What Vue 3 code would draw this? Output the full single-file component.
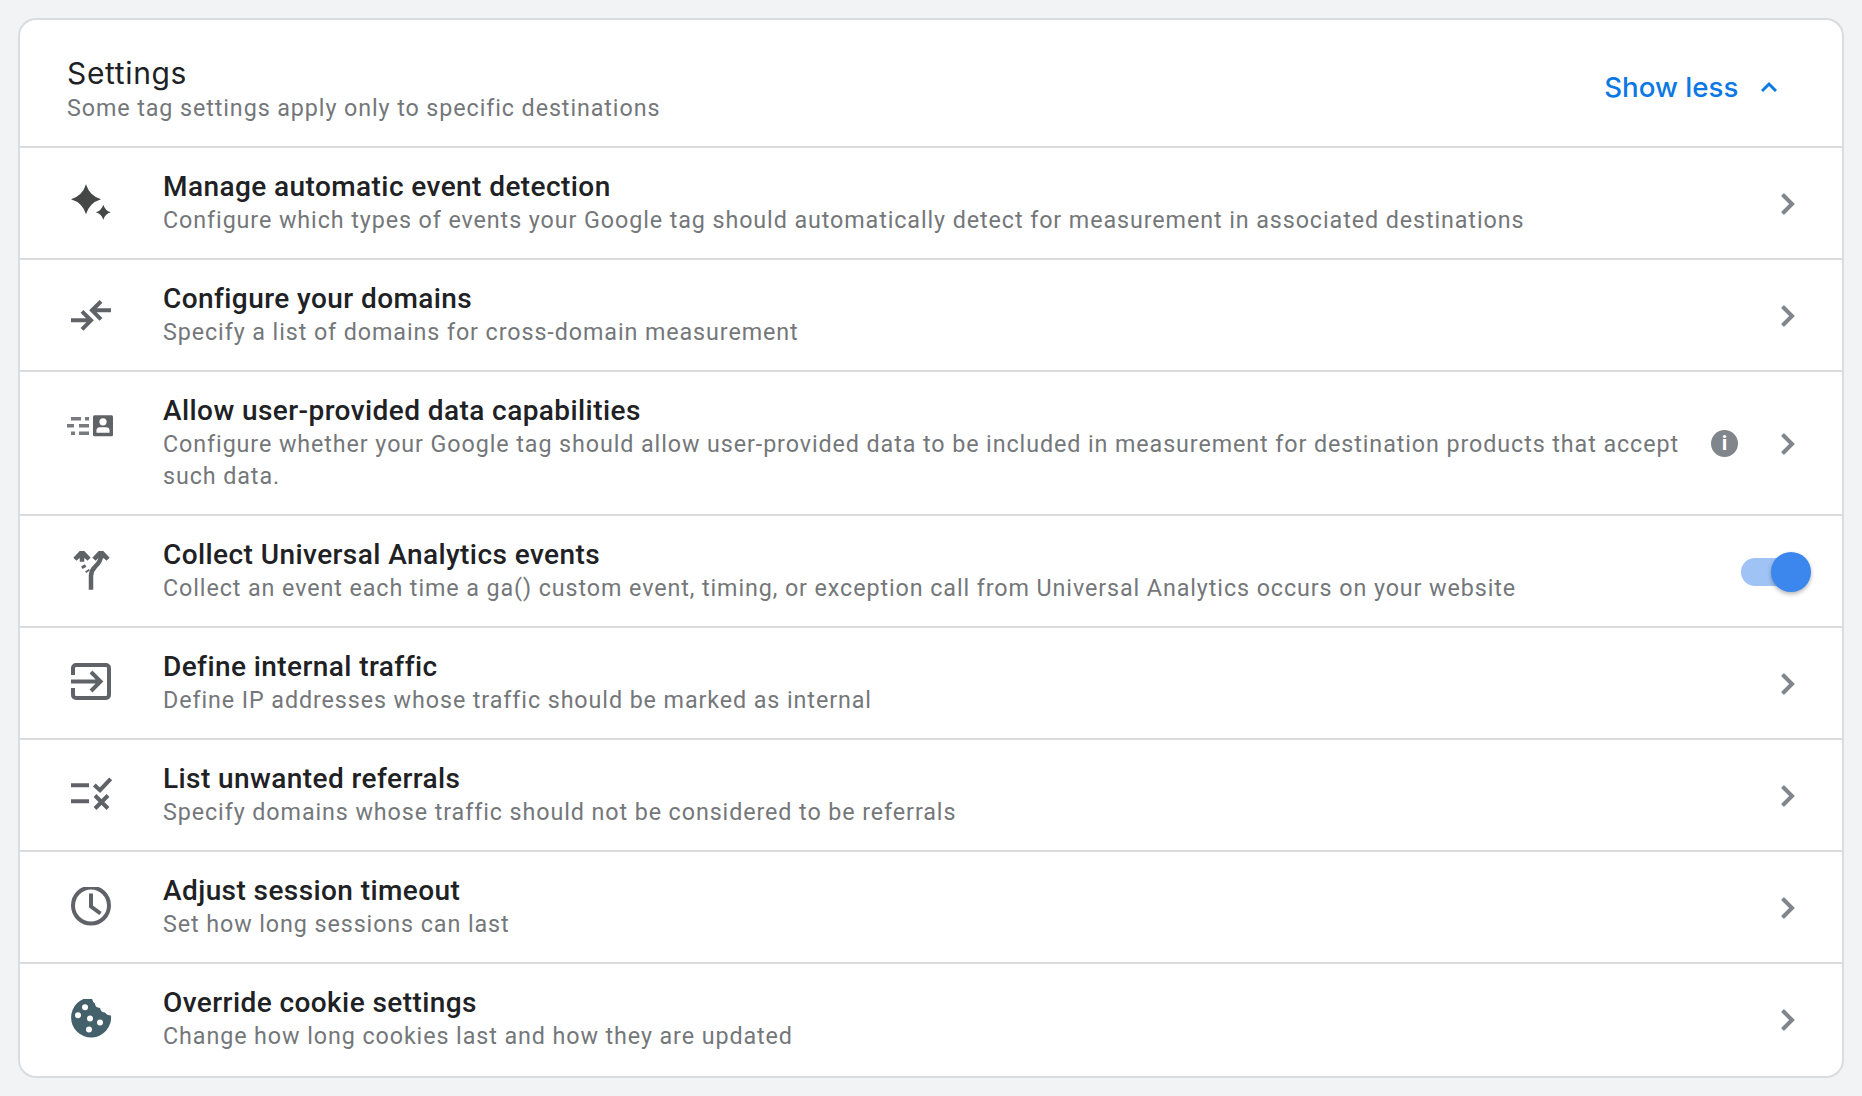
<script setup>
const rows = [
  { icon: 'spark', top: 183.7, title: 'Manage automatic event detection', sub: 'Configure which types of events your Google tag should automatically detect for measurement in associated destinations', ctrl: 'chevron' },
  { icon: 'arrows', top: 295.7, title: 'Configure your domains', sub: 'Specify a list of domains for cross-domain measurement', ctrl: 'chevron' },
  { icon: 'data', top: 407.7, title: 'Allow user-provided data capabilities', sub: 'Configure whether your Google tag should allow user-provided data to be included in measurement for destination products that accept such data.', ctrl: 'chevron', info: true },
  { icon: 'fork', top: 551.2, title: 'Collect Universal Analytics events', sub: 'Collect an event each time a ga() custom event, timing, or exception call from Universal Analytics occurs on your website', ctrl: 'toggle' },
  { icon: 'exit', top: 663, title: 'Define internal traffic', sub: 'Define IP addresses whose traffic should be marked as internal', ctrl: 'chevron' },
  { icon: 'list', top: 775.5, title: 'List unwanted referrals', sub: 'Specify domains whose traffic should not be considered to be referrals', ctrl: 'chevron' },
  { icon: 'clock', top: 887.5, title: 'Adjust session timeout', sub: 'Set how long sessions can last', ctrl: 'chevron' },
  { icon: 'cookie', top: 999.5, title: 'Override cookie settings', sub: 'Change how long cookies last and how they are updated', ctrl: 'chevron' },
]
</script>

<template>
  <main class="page">
    <section class="card">
      <header class="head">
        <div class="head-text">
          <h1 class="h-title">Settings</h1>
          <p class="h-sub">Some tag settings apply only to specific destinations</p>
        </div>
        <button class="more" type="button">
          <span>Show less</span>
          <svg width="16" height="12" viewBox="0 0 16 12" fill="none" stroke="#0b78e3" stroke-width="3"><path d="M1 10l7-7 7 7" /></svg>
        </button>
      </header>

      <div v-for="r in rows" :key="r.title" class="row" :class="r.icon">
        <svg class="ico" width="48" height="40" :viewBox="`67 ${r.top} 48 40`" fill="none" stroke="#5f6368" stroke-width="4">
          <g v-if="r.icon === 'spark'" fill="#444746" stroke="none">
            <path d="M86 184Q89.500 195.500 101 199Q89.500 202.500 86 214Q82.500 202.500 71 199Q82.500 195.500 86 184Z" />
            <path d="M103.300 204.500Q105 210.300 110.800 212Q105 213.700 103.300 219.500Q101.600 213.700 95.800 212Q101.600 210.300 103.300 204.500Z" />
          </g>
          <g v-else-if="r.icon === 'arrows'">
            <path d="M71 320H91M82 311l9 9-9 9" />
            <path d="M111 310H92M101 301l-9 9 9 9" />
          </g>
          <g v-else-if="r.icon === 'data'">
            <path stroke-width="3.600" opacity=".85" d="M71 418.500h10M85 418.500h4M67 425.500h7M79 425.500h10M71 433h4M79 433h10" />
            <rect x="93" y="415" width="20" height="21" rx="1.500" fill="#5f6368" stroke="none" />
            <circle cx="103" cy="421.500" r="3.600" fill="#fff" stroke="none" />
            <path d="M96.500 432.500V430Q96.500 427 100 427H106Q109.500 427 109.500 430V432.500Z" fill="#fff" stroke="none" />
          </g>
          <g v-else-if="r.icon === 'fork'" stroke-width="4.500">
            <path d="M91 590V576Q91 571 95 567Q101 562 101 555" />
            <path d="M82 562V555M83 565.500l1.500 2.500M87 570.500l1 1.500" />
            <path d="M94 559.500l7-7.500 7 7.500M75 559.500l7-7.500 7 7.500" />
            <path d="M101 553l-4 5h8ZM82 553l-4 5h8Z" fill="#5f6368" stroke-width="1" />
          </g>
          <g v-else-if="r.icon === 'exit'">
            <path d="M73 675V668a3 3 0 0 1 3-3H106a3 3 0 0 1 3 3V695a3 3 0 0 1-3 3H76a3 3 0 0 1-3-3V688" />
            <path d="M71 681.500H100M91 672l9.500 9.500-9.500 9.500" />
          </g>
          <g v-else-if="r.icon === 'list'">
            <path d="M71 785.700H89M71 801.700H89M94.300 785.500L100 790.700 110.700 779.300M95 796L108 809M108 796L95 809" />
          </g>
          <g v-else-if="r.icon === 'clock'">
            <circle cx="91" cy="906" r="18" />
            <path d="M91 894V907L100.500 914" />
          </g>
          <g v-else-if="r.icon === 'cookie'" stroke="none">
            <path fill="#44606b" d="M92 998A20 20 0 1 0 111 1016Q107 1016 105 1013Q101 1013 100 1008.500Q95 1008 95 1004Q92 1002 92 998Z" />
            <g fill="#fff">
              <circle cx="85" cy="1007.700" r="3" />
              <circle cx="78" cy="1015.700" r="3" />
              <circle cx="90" cy="1019" r="3" />
              <circle cx="100" cy="1023" r="3" />
              <circle cx="89" cy="1030" r="3" />
            </g>
          </g>
        </svg>

        <div class="text">
          <h2 class="title">{{ r.title }}</h2>
          <p class="sub">{{ r.sub }}</p>
        </div>

        <span v-if="r.info" class="info">i</span>

        <span v-if="r.ctrl === 'toggle'" class="toggle"><span class="knob"></span></span>
        <svg v-else class="chev" width="24" height="32" viewBox="0 0 24 32" fill="none" stroke="#80868b" stroke-width="4">
          <path d="M7.500 6.500L17 16l-9.500 9.500" />
        </svg>
      </div>
    </section>
  </main>
</template>

<style>
html, body { margin: 0; background: #f1f3f4; }
</style>

<style scoped>
.page { padding: 18px; height: 1060px; background: #f1f3f4; }
.card { box-sizing: border-box; background: #fff; border: 2px solid #dadce0; border-radius: 18px; font-family: Roboto, sans-serif; }
.head { box-sizing: border-box; height: 126.200px; padding: 36px 65px 0 47px; display: flex; justify-content: space-between; }
.h-title { margin: 0; font: 400 30px/34px Inter, sans-serif; letter-spacing: .65px; color: #202124; }
.h-sub { margin: 2.500px 0 0; font-size: 23.300px; line-height: 31.500px; letter-spacing: .91px; color: #74777a; }
.more { display: flex; align-items: center; gap: 22.600px; height: 34px; margin-top: 14px; padding: 0; border: 0; background: none; font: 500 27.700px/34px Inter, sans-serif; color: #0b78e3; }
.row { box-sizing: border-box; display: flex; align-items: center; padding: 21.200px 43px 21.800px 47px; border-top: 2px solid #dadce0; }
.row.data { padding-bottom: 21.300px; }
.row.fork { padding-bottom: 22.100px; }
.row.cookie { padding-bottom: 23.800px; }
.ico { align-self: flex-start; flex: none; margin-top: 14.300px; margin-right: 48px; }
.text { flex: 1; min-width: 0; }
.title { margin: 0; font-size: 28px; font-weight: 500; line-height: 35px; letter-spacing: .42px; color: #202124; }
.sub { margin: 0; font-size: 23.300px; line-height: 32px; letter-spacing: .91px; color: #74777a; }
.info { flex: none; width: 27px; height: 27px; margin-top: 1px; margin-left: 31px; margin-right: 37px; border-radius: 50%; background: #80868b; color: #fff; font: 700 21px/27px Roboto, sans-serif; text-align: center; }
.chev { flex: none; margin-top: 2.500px; }
.toggle { position: relative; flex: none; width: 59px; height: 28px; margin-top: 3px; margin-right: -1px; border-radius: 14px; background: #a0c3f6; }
.knob { position: absolute; top: -6px; right: -11px; width: 40px; height: 40px; border-radius: 50%; background: #3b87ee; box-shadow: 0 2px 4px rgba(0,0,0,.3); }
</style>
